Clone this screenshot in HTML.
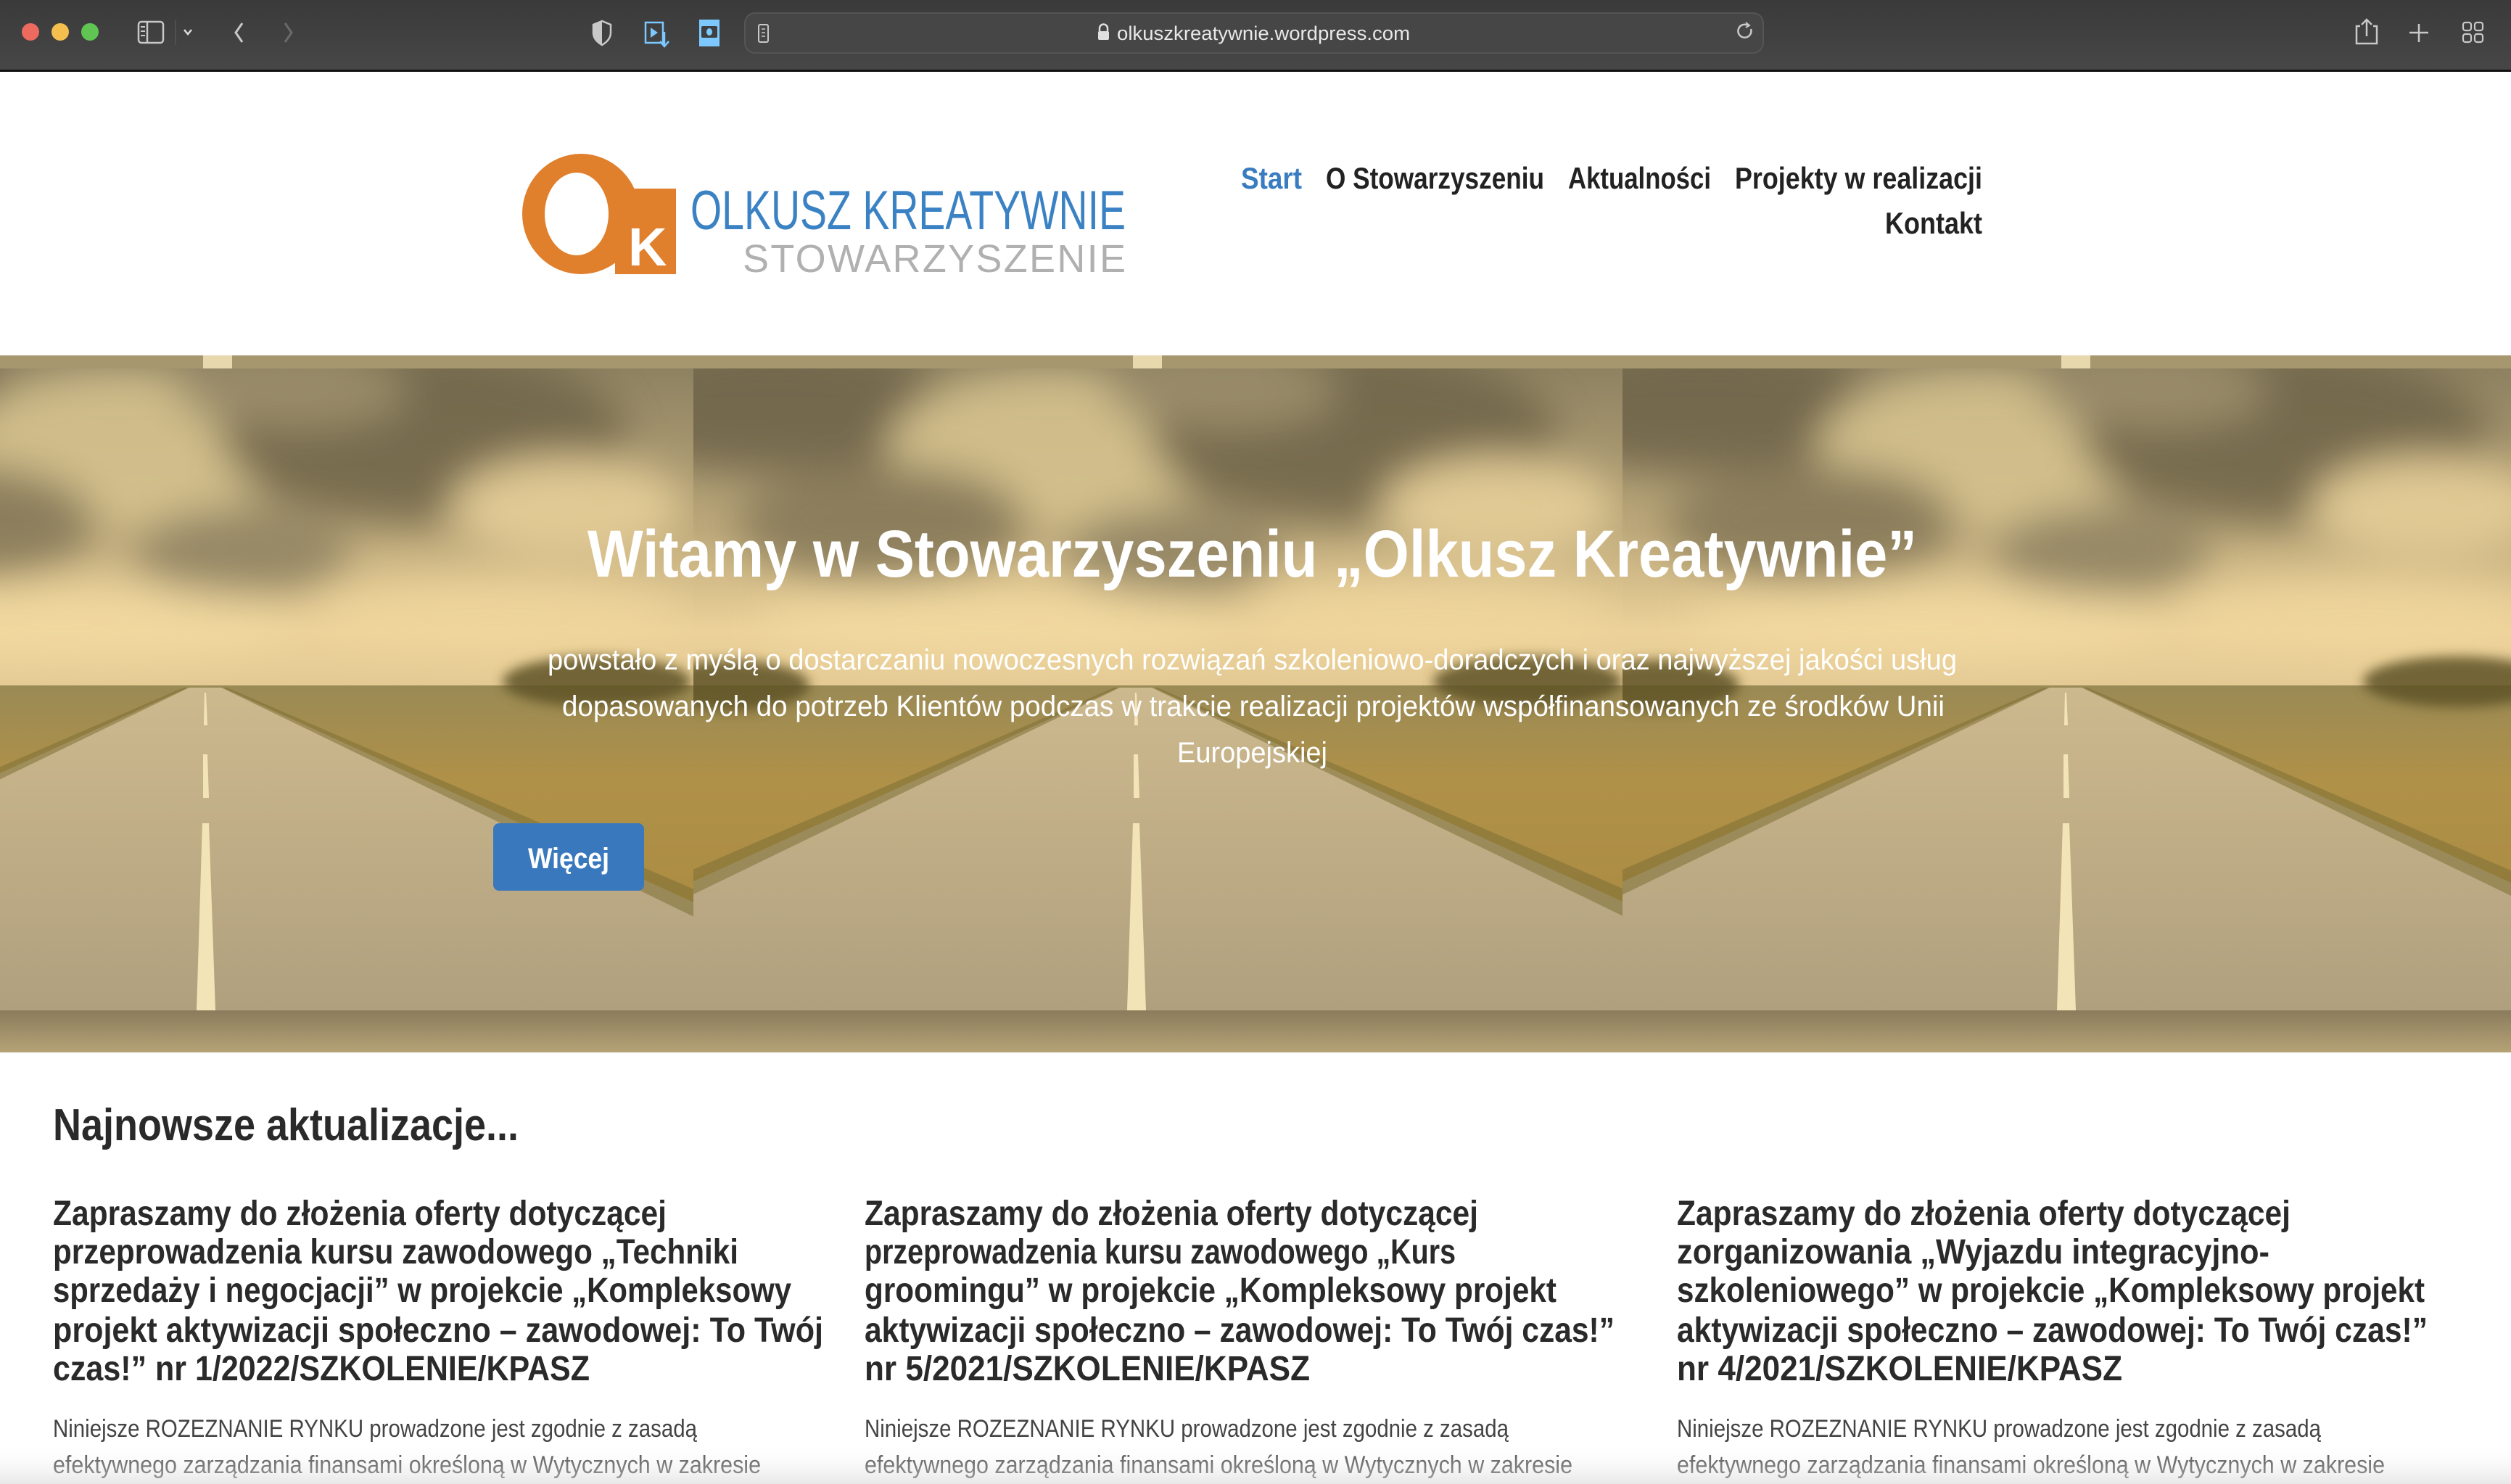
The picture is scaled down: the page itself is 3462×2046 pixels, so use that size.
<!DOCTYPE html>
<html><head><meta charset="utf-8"><style>
html,body{margin:0;padding:0;background:#fff;width:3462px;height:2046px;overflow:hidden}
svg{display:block}
</style></head><body>
<svg width="3462" height="2046" viewBox="0 0 3462 2046" xmlns="http://www.w3.org/2000/svg" font-family="'Liberation Sans Narrow','Liberation Sans',sans-serif">
<defs>
<linearGradient id="tb" x1="0" y1="0" x2="0" y2="1"><stop offset="0" stop-color="#3a3a3a"/><stop offset="1" stop-color="#474747"/></linearGradient>
<linearGradient id="sky" x1="0" y1="0" x2="0" y2="1"><stop offset="0" stop-color="#8e8262"/><stop offset="0.5" stop-color="#bca87a"/><stop offset="0.82" stop-color="#ecd29a"/><stop offset="1" stop-color="#e2c893"/></linearGradient>
<linearGradient id="field" x1="0" y1="0" x2="0" y2="1"><stop offset="0" stop-color="#9a8a55"/><stop offset="0.3" stop-color="#b09148"/><stop offset="1" stop-color="#a8883f"/></linearGradient>
<linearGradient id="road" x1="0" y1="0" x2="0" y2="1"><stop offset="0" stop-color="#cdb98e"/><stop offset="1" stop-color="#b0a07e"/></linearGradient>
<linearGradient id="band" x1="0" y1="0" x2="0" y2="1"><stop offset="0" stop-color="#8a7c5c"/><stop offset="1" stop-color="#b5a276"/></linearGradient>
<linearGradient id="fade" x1="0" y1="0" x2="0" y2="1"><stop offset="0" stop-color="#fff" stop-opacity="0"/><stop offset="1" stop-color="#d8d8d8"/></linearGradient>
<filter id="bl" x="-50%" y="-50%" width="200%" height="200%"><feGaussianBlur stdDeviation="28"/></filter>
<filter id="bl2" x="-50%" y="-50%" width="200%" height="200%"><feGaussianBlur stdDeviation="8"/></filter>
<clipPath id="c1"><rect x="0" y="490" width="956" height="961"/></clipPath>
<clipPath id="c2"><rect x="956" y="490" width="1281" height="961"/></clipPath>
<clipPath id="c3"><rect x="2237" y="490" width="1225" height="961"/></clipPath>
<g id="scene">
<rect x="-1400" y="508" width="2800" height="442" fill="url(#sky)"/>
<g filter="url(#bl)" opacity="0.85">
<ellipse cx="-500" cy="560" rx="260" ry="90" fill="#6e6448"/>
<ellipse cx="-120" cy="620" rx="220" ry="110" fill="#d8c490"/>
<ellipse cx="300" cy="600" rx="280" ry="120" fill="#6f6548"/>
<ellipse cx="500" cy="700" rx="160" ry="70" fill="#e8d09a"/>
<ellipse cx="-350" cy="720" rx="200" ry="80" fill="#857858"/>
<ellipse cx="50" cy="760" rx="150" ry="60" fill="#8f8262"/>
<ellipse cx="120" cy="540" rx="160" ry="50" fill="#9a8c6a"/>
<ellipse cx="-200" cy="860" rx="320" ry="50" fill="#f2d9a0"/>
<ellipse cx="400" cy="850" rx="260" ry="50" fill="#f0d69c"/>
</g>
<rect x="-1400" y="945" width="2800" height="448" fill="url(#field)"/>
<g filter="url(#bl2)" opacity="0.85">
<ellipse cx="-560" cy="945" rx="110" ry="35" fill="#5e5228"/>
<ellipse cx="-880" cy="950" rx="60" ry="25" fill="#5e5228"/>
<ellipse cx="540" cy="940" rx="130" ry="35" fill="#5e5228"/>
</g>
<polygon points="-24,948 24,948 1000,1393 -1000,1393" fill="url(#road)"/>
<polygon points="-30,948 -22,948 -940,1393 -1060,1393" fill="#7d7035" opacity="0.55"/>
<polygon points="22,948 30,948 1060,1393 940,1393" fill="#7d7035" opacity="0.55"/>
<polygon points="-1,955 1,955 3,1000 -2,1000" fill="#f3e4b8"/>
<polygon points="-3,1040 3,1040 5,1100 -3,1100" fill="#f3e4b8"/>
<polygon points="-4,1135 5,1135 14,1393 -12,1393" fill="#f3e4b8"/>
</g>
</defs>

<!-- toolbar -->
<rect x="0" y="0" width="3462" height="98" fill="url(#tb)"/>
<rect x="0" y="96" width="3462" height="3" fill="#111"/>
<circle cx="42" cy="44" r="12" fill="#ec6a5e"/>
<circle cx="83" cy="44" r="12" fill="#f4bf4f"/>
<circle cx="124" cy="44" r="12" fill="#61c554"/>
<rect x="191" y="30" width="34" height="29" rx="4" fill="none" stroke="#c8c8c8" stroke-width="2.5"/>
<line x1="203" y1="30" x2="203" y2="59" stroke="#c8c8c8" stroke-width="2.5"/>
<path d="M194 37h6M194 43h6M194 49h6" stroke="#c8c8c8" stroke-width="2"/>
<line x1="242" y1="28" x2="242" y2="62" stroke="#555" stroke-width="1.5"/>
<path d="M254 41l5 6 5-6" stroke="#ddd" stroke-width="2.5" fill="none"/>
<path d="M334 32l-9 13 9 13" stroke="#c8c8c8" stroke-width="3" fill="none"/>
<path d="M393 32l9 13-9 13" stroke="#6a6a6a" stroke-width="3" fill="none"/>
<path d="M830 29l-12 5v11c0 8 5 13 12 17 7-4 12-9 12-17V34z" fill="none" stroke="#c8c8c8" stroke-width="2.5"/>
<path d="M830 29v33c-7-4-12-9-12-17V34z" fill="#c8c8c8"/>
<rect x="890" y="31" width="24" height="28" fill="none" stroke="#7cc8ff" stroke-width="2.5"/>
<path d="M897 38l10 7-10 7z" fill="#7cc8ff"/>
<path d="M916 44v18M910 57l6 7 6-7" stroke="#7cc8ff" stroke-width="2.5" fill="none"/>
<rect x="964" y="27" width="28" height="37" fill="#7cc8ff"/>
<rect x="967" y="36" width="22" height="16" rx="2" fill="#3f3f3f"/>
<ellipse cx="978" cy="44" rx="4" ry="5" fill="#7cc8ff"/>
<rect x="1027" y="18" width="1404" height="55" rx="14" fill="#464646" stroke="#555" stroke-width="2"/>
<rect x="1046" y="34" width="13" height="24" rx="2" fill="none" stroke="#c8c8c8" stroke-width="2"/>
<path d="M1050 40h5M1050 45h5M1050 50h5" stroke="#c8c8c8" stroke-width="1.5"/>
<rect x="1514" y="43" width="15" height="12" rx="2" fill="#e0e0e0"/>
<path d="M1516 43v-4a5.5 5.5 0 0 1 11 0v4" fill="none" stroke="#e0e0e0" stroke-width="2.5"/>
<text x="1540" y="55" font-family="'Liberation Sans',sans-serif" font-size="27" fill="#e8e8e8" textLength="404" lengthAdjust="spacingAndGlyphs">olkuszkreatywnie.wordpress.com</text>
<path d="M2414 40a9 9 0 1 1-4-5" fill="none" stroke="#c8c8c8" stroke-width="2.5"/>
<path d="M2407 31l5 4-5 3" fill="none" stroke="#c8c8c8" stroke-width="2"/>
<path d="M3254 36h-5v24h28v-24h-5M3263 28v22M3256 34l7-7 7 7" fill="none" stroke="#c8c8c8" stroke-width="2.5"/>
<path d="M3335 33v25M3322 45h26" stroke="#c8c8c8" stroke-width="2.5"/>
<rect x="3396" y="31" width="11" height="11" rx="3" fill="none" stroke="#c8c8c8" stroke-width="2.2"/>
<rect x="3412" y="31" width="11" height="11" rx="3" fill="none" stroke="#c8c8c8" stroke-width="2.2"/>
<rect x="3396" y="47" width="11" height="11" rx="3" fill="none" stroke="#c8c8c8" stroke-width="2.2"/>
<rect x="3412" y="47" width="11" height="11" rx="3" fill="none" stroke="#c8c8c8" stroke-width="2.2"/>

<!-- logo -->
<ellipse cx="801" cy="295" rx="81" ry="83" fill="#e07f2c"/>
<ellipse cx="795" cy="295" rx="44" ry="57" fill="#fff"/>
<rect x="848" y="260" width="84" height="118" fill="#e07f2c"/>
<text x="866" y="366" font-family="'Liberation Sans',sans-serif" font-weight="bold" font-size="74" fill="#fff">K</text>
<text x="952" y="316" font-family="'Liberation Sans',sans-serif" font-size="76" fill="#3b82c4" textLength="600" lengthAdjust="spacingAndGlyphs">OLKUSZ KREATYWNIE</text>
<text x="1024" y="375" font-family="'Liberation Sans',sans-serif" font-size="54" fill="#b0b0b0" textLength="528" lengthAdjust="spacing">STOWARZYSZENIE</text>

<!-- nav -->
<g font-size="42" font-weight="bold">
<text x="1711" y="260" fill="#3a7cc0" textLength="84" lengthAdjust="spacingAndGlyphs">Start</text>
<text x="1828" y="260" fill="#222" textLength="301" lengthAdjust="spacingAndGlyphs">O Stowarzyszeniu</text>
<text x="2162" y="260" fill="#222" textLength="197" lengthAdjust="spacingAndGlyphs">Aktualności</text>
<text x="2392" y="260" fill="#222" textLength="341" lengthAdjust="spacingAndGlyphs">Projekty w realizacji</text>
<text x="2599" y="322" fill="#222" textLength="134" lengthAdjust="spacingAndGlyphs">Kontakt</text>
</g>

<!-- hero -->
<rect x="0" y="490" width="3462" height="961" fill="#bba67a"/>
<g clip-path="url(#c1)"><use href="#scene" transform="translate(283,0)"/></g>
<g clip-path="url(#c2)"><use href="#scene" transform="translate(1566,0)"/></g>
<g clip-path="url(#c3)"><use href="#scene" transform="translate(2848,0)"/></g>
<rect x="0" y="490" width="3462" height="18" fill="#a7976e"/>
<rect x="280" y="490" width="40" height="18" fill="#e8d8ae"/>
<rect x="1562" y="490" width="40" height="18" fill="#e8d8ae"/>
<rect x="2842" y="490" width="40" height="18" fill="#e8d8ae"/>
<rect x="0" y="1393" width="3462" height="58" fill="url(#band)"/>
<text x="810" y="795" font-size="92" font-weight="bold" fill="#fff" textLength="1833" lengthAdjust="spacingAndGlyphs">Witamy w Stowarzyszeniu „Olkusz Kreatywnie”</text>
<g font-size="40" fill="#fff">
<text x="755" y="923" textLength="1943" lengthAdjust="spacingAndGlyphs">powstało z myślą o dostarczaniu nowoczesnych rozwiązań szkoleniowo-doradczych i oraz najwyższej jakości usług</text>
<text x="775" y="987" textLength="1906" lengthAdjust="spacingAndGlyphs">dopasowanych do potrzeb Klientów podczas w trakcie realizacji projektów współfinansowanych ze środków Unii</text>
<text x="1623" y="1051" textLength="207" lengthAdjust="spacingAndGlyphs">Europejskiej</text>
</g>
<rect x="680" y="1135" width="208" height="93" rx="8" fill="#3a78be"/>
<text x="728" y="1197" font-size="40" font-weight="bold" fill="#fff" textLength="112" lengthAdjust="spacingAndGlyphs">Więcej</text>

<!-- latest -->
<text x="73" y="1572" font-size="62" font-weight="bold" fill="#2a2a2a" textLength="642" lengthAdjust="spacingAndGlyphs">Najnowsze aktualizacje...</text>
<g font-size="48" font-weight="bold" fill="#2a2a2a">
<text x="73" y="1689" textLength="846" lengthAdjust="spacingAndGlyphs">Zapraszamy do złożenia oferty dotyczącej</text>
<text x="73" y="1742" textLength="945" lengthAdjust="spacingAndGlyphs">przeprowadzenia kursu zawodowego „Techniki</text>
<text x="73" y="1795" textLength="1018" lengthAdjust="spacingAndGlyphs">sprzedaży i negocjacji” w projekcie „Kompleksowy</text>
<text x="73" y="1850" textLength="1062" lengthAdjust="spacingAndGlyphs">projekt aktywizacji społeczno – zawodowej: To Twój</text>
<text x="73" y="1903" textLength="740" lengthAdjust="spacingAndGlyphs">czas!” nr 1/2022/SZKOLENIE/KPASZ</text>

<text x="1192" y="1689" textLength="846" lengthAdjust="spacingAndGlyphs">Zapraszamy do złożenia oferty dotyczącej</text>
<text x="1192" y="1742" textLength="815" lengthAdjust="spacingAndGlyphs">przeprowadzenia kursu zawodowego „Kurs</text>
<text x="1192" y="1795" textLength="954" lengthAdjust="spacingAndGlyphs">groomingu” w projekcie „Kompleksowy projekt</text>
<text x="1192" y="1850" textLength="1034" lengthAdjust="spacingAndGlyphs">aktywizacji społeczno – zawodowej: To Twój czas!”</text>
<text x="1192" y="1903" textLength="614" lengthAdjust="spacingAndGlyphs">nr 5/2021/SZKOLENIE/KPASZ</text>

<text x="2312" y="1689" textLength="846" lengthAdjust="spacingAndGlyphs">Zapraszamy do złożenia oferty dotyczącej</text>
<text x="2312" y="1742" textLength="817" lengthAdjust="spacingAndGlyphs">zorganizowania  „Wyjazdu integracyjno-</text>
<text x="2312" y="1795" textLength="1031" lengthAdjust="spacingAndGlyphs">szkoleniowego” w projekcie „Kompleksowy projekt</text>
<text x="2312" y="1850" textLength="1035" lengthAdjust="spacingAndGlyphs">aktywizacji społeczno – zawodowej: To Twój czas!”</text>
<text x="2312" y="1903" textLength="614" lengthAdjust="spacingAndGlyphs">nr 4/2021/SZKOLENIE/KPASZ</text>
</g>
<g font-size="34" fill="#444">
<text x="73" y="1981" textLength="888" lengthAdjust="spacingAndGlyphs">Niniejsze ROZEZNANIE RYNKU prowadzone jest zgodnie z zasadą</text>
<text x="73" y="2031" textLength="976" lengthAdjust="spacingAndGlyphs">efektywnego zarządzania finansami określoną w Wytycznych w zakresie</text>
<text x="1192" y="1981" textLength="888" lengthAdjust="spacingAndGlyphs">Niniejsze ROZEZNANIE RYNKU prowadzone jest zgodnie z zasadą</text>
<text x="1192" y="2031" textLength="976" lengthAdjust="spacingAndGlyphs">efektywnego zarządzania finansami określoną w Wytycznych w zakresie</text>
<text x="2312" y="1981" textLength="888" lengthAdjust="spacingAndGlyphs">Niniejsze ROZEZNANIE RYNKU prowadzone jest zgodnie z zasadą</text>
<text x="2312" y="2031" textLength="976" lengthAdjust="spacingAndGlyphs">efektywnego zarządzania finansami określoną w Wytycznych w zakresie</text>
</g>
<rect x="0" y="1990" width="3462" height="56" fill="url(#fade)" opacity="0.6"/>
</svg>
</body></html>
